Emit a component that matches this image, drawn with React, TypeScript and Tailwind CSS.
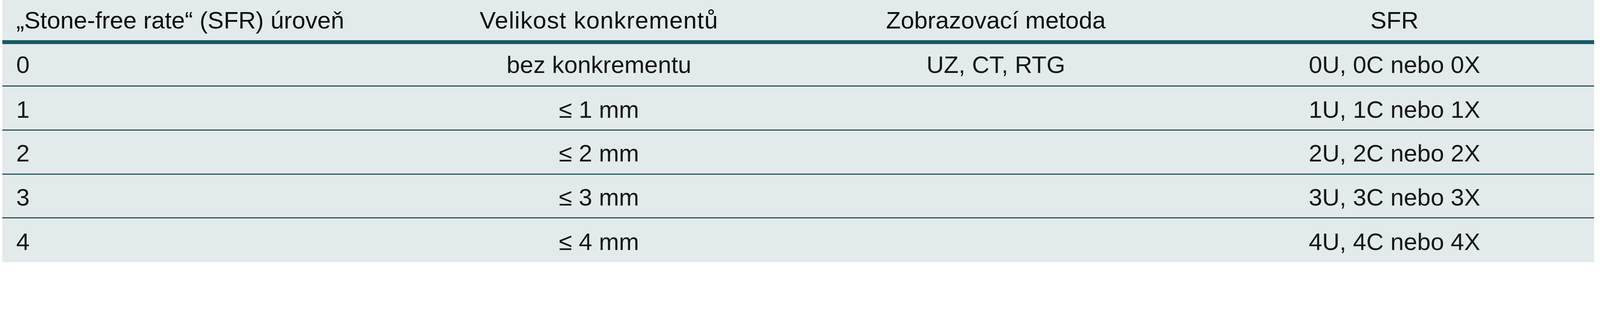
import React from "react";

const rows = [
  { lvl: "0", size: "bez konkrementu", method: "UZ, CT, RTG", sfr: "0U, 0C nebo 0X" },
  { lvl: "1", size: "≤ 1 mm", method: "", sfr: "1U, 1C nebo 1X" },
  { lvl: "2", size: "≤ 2 mm", method: "", sfr: "2U, 2C nebo 2X" },
  { lvl: "3", size: "≤ 3 mm", method: "", sfr: "3U, 3C nebo 3X" },
  { lvl: "4", size: "≤ 4 mm", method: "", sfr: "4U, 4C nebo 4X" },
];

const rowClass = [
  "h-[2.6678vw] border-b-[0.0861vw] border-[#2b5559]",
  "h-[2.7539vw] border-b-[0.0861vw] border-[#2b5559] pt-[0.1721vw]",
  "h-[2.7539vw] border-b-[0.0861vw] border-[#2b5559] pt-[0.1721vw]",
  "h-[2.7539vw] border-b-[0.0861vw] border-[#2b5559] pt-[0.1721vw]",
  "h-[2.7324vw] pt-[0.1721vw]",
];

const cols = "grid grid-cols-[25.667vw_23.236vw_26.377vw_23.451vw] pr-[0.753vw] items-center";

export default function App() {
  return (
    <div className="w-full bg-white">
      <div
        className="ml-[0.1506vw] w-[99.48vw] bg-[#e3eaec] text-[1.506vw] leading-none text-[#161616]"
        style={{ fontFamily: '"Liberation Sans", Arial, sans-serif' }}
      >
        <div className={`${cols} h-[2.7539vw] border-b-[0.2582vw] border-[#155b64] text-[#0d0d0d]`}>
          <div className="pl-[0.8606vw] whitespace-nowrap">„Stone-free rate“ (SFR) úroveň</div>
          <div className="text-center whitespace-nowrap tracking-[0.02em]">Velikost konkrementů</div>
          <div className="text-center whitespace-nowrap">Zobrazovací metoda</div>
          <div className="text-center whitespace-nowrap">SFR</div>
        </div>
        {rows.map((r, i) => (
          <div key={r.lvl} className={`${cols} ${rowClass[i]}`}>
            <div className="pl-[0.8606vw] whitespace-nowrap">{r.lvl}</div>
            <div className="text-center whitespace-nowrap">{r.size}</div>
            <div className="text-center whitespace-nowrap">{r.method}</div>
            <div className="text-center whitespace-nowrap">{r.sfr}</div>
          </div>
        ))}
      </div>
    </div>
  );
}
